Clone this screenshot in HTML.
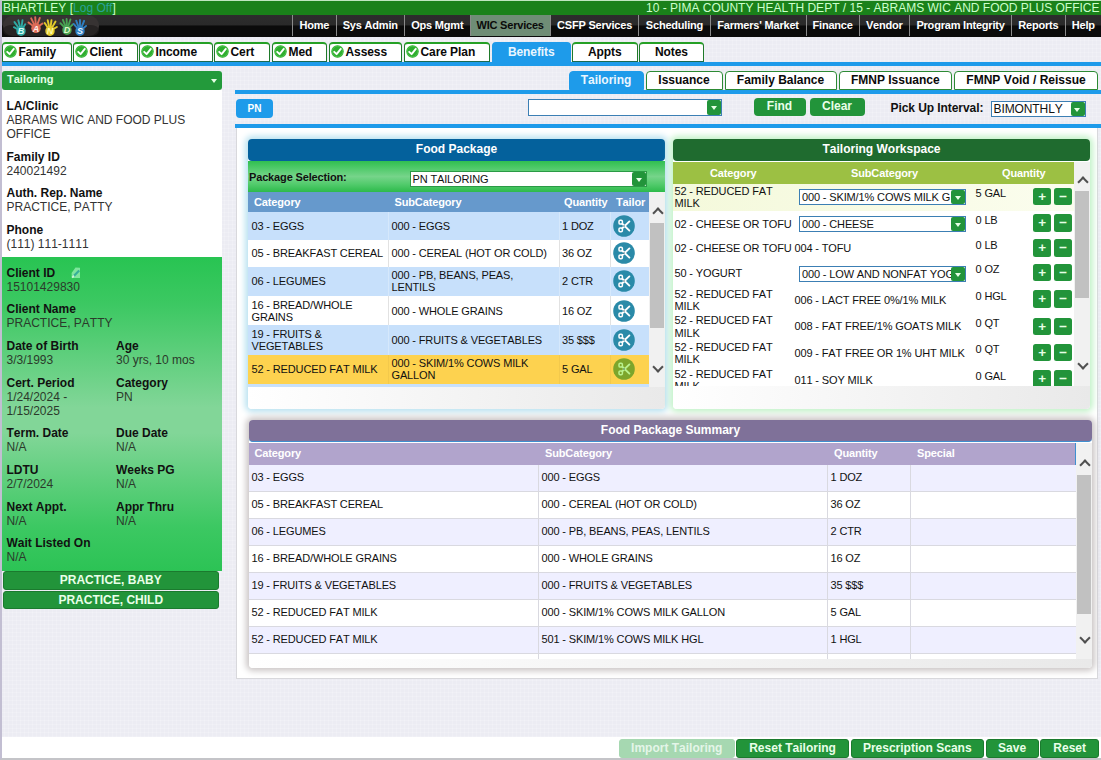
<!DOCTYPE html>
<html><head><meta charset="utf-8"><title>HANDS</title>
<style>
*{box-sizing:border-box;margin:0;padding:0}
html,body{width:1101px;height:760px;overflow:hidden}
body{font-family:"Liberation Sans",sans-serif;font-kerning:none;font-size:12px;color:#151515;background:#ececf3;position:relative}
body::before{content:"";position:absolute;left:0;top:0;width:1101px;height:760px;background-image:linear-gradient(rgba(255,255,255,.16) 1px,transparent 1px),linear-gradient(90deg,rgba(255,255,255,.16) 1px,transparent 1px);background-size:4px 4px}
#frame{position:absolute;left:0;top:0;width:1101px;height:760px;border-left:2px solid #c2bed2;border-top:1px solid #bfe6bf;border-bottom:2px solid #c4c4c8}
#top{position:absolute;left:2px;top:1px;width:1099px;height:14px;background:#1a811a;color:#ccffcc;font-size:12px;line-height:14px;white-space:nowrap}
#top .l{position:absolute;left:1px;top:0}
#top .r{position:absolute;right:1.5px;top:0}
#top a{color:#2aa39a}
#nav{position:absolute;left:2px;top:15px;width:1099px;height:21.5px;background:linear-gradient(#2d2d2d 0,#2a2a2a 45%,#0b0b0b 50%,#0b0b0b 100%)}
#logo{position:absolute;left:0;top:0}
#nav .it{position:absolute;top:0;height:21px;border-left:1px solid #8a8a8a;color:#fff;font-weight:bold;font-size:11px;line-height:21px;text-align:center;white-space:nowrap;letter-spacing:-0.2px}
#nav .sel{background:#6f8d76;color:#0a0a0a}
.tab{position:absolute;top:42px;height:19.5px;border:1px solid #1f7a2a;border-top:2px solid #25a025;border-bottom:1px solid #1b6b50;border-radius:4px 4px 0 0;background:#fff;font-weight:bold;font-size:12px;letter-spacing:-0.08px;line-height:16px;white-space:nowrap;color:#0a0a0a}
.tab .ck{position:absolute;left:1px;top:0.5px}
.tab .tx{position:absolute;left:15.5px;top:0}
.cx{display:block;text-align:center}
.tab.sel{background:#1e9bea;border-color:#1e9bea;color:#eaf6ff}
.stab{position:absolute;top:71px;height:19px;border:1px solid #2c8a34;border-top-width:1.5px;border-radius:4px 4px 0 0;background:#fff;font-weight:bold;font-size:12px;line-height:16px;white-space:nowrap;color:#0a0a0a}
.stab.sel{background:#1e9bea;border-color:#1e9bea;color:#eaf6ff}
.bline{position:absolute;background:#1e9bea}
.f12{font-size:12px!important;letter-spacing:-0.1px!important}
#sbhead{position:absolute;left:2px;top:71px;width:220px;height:18.5px;background:#239a3b;border-radius:3px;color:#e6ffe6;font-weight:bold;font-size:11px;line-height:17px;padding-left:5px}
#sbhead i{position:absolute;right:5px;top:8px;border:3.5px solid transparent;border-top:4px solid #e6ffe6;border-bottom:none}
#sbwhite{position:absolute;left:2px;top:90px;width:220px;height:167px;background:#fff;padding:9px 0 0 4.5px;font-size:12px;line-height:14px;color:#333}
#sbgreen{position:absolute;left:2px;top:257px;width:220px;height:314px;background:linear-gradient(#28c452 0,#3cc862 15%,#82d698 48%,#82d698 56%,#3cc862 86%,#2cc355 100%);padding:9px 0 0 4.5px;font-size:12px;line-height:14px;color:#2b3a2b}
.g{margin-bottom:8.6px;position:relative}
.g b{color:#111}
.g.two{height:28px}
.g.two.three{height:42px}
.g.two .c1{position:absolute;left:0;top:0}
.g.two .c2{position:absolute;left:109.5px;top:0}
.ed{position:absolute;left:64.7px;top:0.8px}
.sbbtn{position:absolute;left:2.5px;width:216.5px;height:18.5px;background:#22943a;border:1px solid #1b7a2e;border-radius:3px;color:#e9ffe9;font-weight:bold;font-size:12px;line-height:16.5px;text-align:center}
.btn{position:absolute;border-radius:4px;color:#fff;font-weight:bold;font-size:12px;text-align:center;line-height:17px}
.btn.blue{background:#1e9bea}
.btn.grn{background:#22943a;color:#e9ffe9}
#pui{position:absolute;left:890.5px;top:101px;font-weight:bold;font-size:12px;letter-spacing:-0.07px;line-height:15px;white-space:nowrap;color:#111}
.selbox{position:absolute;background:#fff;border:1px solid #2a9a45;font-size:11px;letter-spacing:-0.14px;line-height:14px;white-space:nowrap;overflow:hidden;color:#111}
.selbox.blue{border-color:#3c7fb4}
.selbox span{position:absolute;left:2px;top:0}
.selbox .dd{position:absolute;right:0;top:0;bottom:0;width:14px;background:#22943a;border-radius:2px}
.selbox .dd::after{content:"";position:absolute;left:3.5px;top:6px;border:3.5px solid transparent;border-top:4px solid #e6ffe6;border-bottom:none}
#cont{position:absolute;left:236px;top:127.5px;width:862px;height:551px;background:#fff;border:1px solid #d8d8dc;border-top:none}
.panel{position:absolute}
.ptitle{position:absolute;left:0;top:0;right:0;height:22px;border-radius:4px;color:#fff;font-weight:bold;font-size:12px;line-height:20px;text-align:center}
#fp{left:248px;top:139px;width:417px;height:270px;box-shadow:0 0 6px 3px #b9e2f0;border-radius:4px;background:#fff}
#fpsel{position:absolute;left:0;top:22px;width:417px;height:31px;background:linear-gradient(#30bf50 0,#52cb6c 25%,#76d48a 50%,#52cb6c 75%,#2dba4b 100%);font-size:11px;line-height:32px;color:#111}
#fpsel b{position:absolute;left:1px;top:0;letter-spacing:-0.15px}
.thead{position:absolute;left:0;color:#fff;font-weight:bold;font-size:11px;letter-spacing:-0.14px}
.thead span{position:absolute;top:0;line-height:inherit;white-space:nowrap}
.thead{line-height:20px}
.frow{position:absolute;left:0;width:401px;font-size:11px;letter-spacing:-0.14px;line-height:12px;color:#111}
.frow .c{position:absolute;top:0;bottom:0;display:flex;align-items:center}
.frow .c span{display:block;padding-left:3.5px}
.frow .b span{padding-left:2.5px}
.frow .q span{padding-left:2px}
.frow .a{left:0;width:140px}
.frow .b{left:140px;width:171px;border-left:1px solid rgba(255,255,255,.25)}
.frow .q{left:311px;width:51px;border-left:1px solid rgba(255,255,255,.25)}
.frow .t{left:362px;width:39px;border-left:1px solid rgba(255,255,255,.25)}
.frow.w .b,.frow.w .q,.frow.w .t{border-left-color:#e2e2e2}
.frow.y .b,.frow.y .q,.frow.y .t{border-left-color:#f3c94c}
.frow .sc{margin-left:2px}
.sbar{position:absolute;width:16px;background:#f1f1f1}
.sbar b{position:absolute;left:1px;width:14px;background:#c1c1c1}
.sbar i{position:absolute;left:3.5px;width:9px;height:9px}
.sbar i.up::after,.sbar i.dn::after{content:"";position:absolute;left:1px;top:2px;width:6px;height:6px;border-left:2px solid #505050;border-top:2px solid #505050;transform:rotate(45deg)}
.sbar i.dn::after{transform:rotate(225deg);top:-3px}
.pfoot{position:absolute;left:0;right:0;background:linear-gradient(90deg,#fff,#e9e9e9);border-radius:0 0 4px 4px}
#tw{left:673px;top:139px;width:417px;height:270px;box-shadow:0 0 6px 3px #c2f2c8;border-radius:4px;background:#fff}
.clip{position:absolute;left:0;overflow:hidden}
.trow{font-size:11px;letter-spacing:-0.14px;line-height:12.4px;color:#111;white-space:nowrap}
.trow .hl{position:absolute;left:0;width:401px;background:linear-gradient(90deg,#f4f9db,#fbfdee)}
.trow .tx{position:absolute}
.pm{position:absolute;width:18px;height:17.5px;background:#22943a;border-radius:2.5px;color:#e6ffe6;font-weight:bold;font-size:13.5px;line-height:17px;text-align:center}
#sm{left:249px;top:420px;width:843px;height:248px;box-shadow:0 0 6px 3px #cbc6c6;border-radius:4px;background:#fff}
.srow{position:absolute;left:0;width:827px;height:27px;font-size:11px;letter-spacing:-0.14px;line-height:24px;border-bottom:1px solid #d9d9e0;color:#111}
.srow .c{position:absolute;top:0;height:26px;border-left:1px solid #d9d9e0;white-space:nowrap}
.srow .c:first-child{border-left:none}
.srow .c span{padding-left:2.5px}
#bbar{position:absolute;left:2px;top:737px;width:1099px;height:21px;background:#fff}
.bbtn{position:absolute;top:739px;height:18.5px;background:#22943a;border:1px solid #1b7a2e;border-radius:3px;color:#e9ffe9;font-weight:bold;font-size:12px;line-height:16.5px;text-align:center;white-space:nowrap}
.bbtn.dis{background:#a6d8b1;border-color:#a6d8b1;color:#e4f5e8}

</style></head><body>
<div id="frame"></div>
<div id="top"><span class="l">BHARTLEY [<a>Log Off</a>]</span><span class="r">10 - PIMA COUNTY HEALTH DEPT / 15 - ABRAMS WIC AND FOOD PLUS OFFICE</span></div>
<div id="nav">
<svg id="logo" width="100" height="22" viewBox="0 0 100 22"><defs><filter id="lb" x="-10%" y="-10%" width="120%" height="120%"><feGaussianBlur stdDeviation="0.55"/></filter></defs><rect x="1" y="0.5" width="96" height="20.5" rx="10" fill="#373333"/><rect x="1" y="10" width="96" height="11" rx="8" fill="#1f1c1c" opacity=".7"/><g filter="url(#lb)"><ellipse cx="19.0" cy="16.0" rx="4.7" ry="4.9" fill="#2fa9a3"/><line x1="15.9" y1="14.4" x2="11.9" y2="12.2" stroke="#2fa9a3" stroke-width="1.9" stroke-linecap="round"/><line x1="16.9" y1="13.2" x2="12.5" y2="7.1" stroke="#2fa9a3" stroke-width="1.9" stroke-linecap="round"/><line x1="18.2" y1="12.6" x2="16.3" y2="5.3" stroke="#2fa9a3" stroke-width="1.9" stroke-linecap="round"/><line x1="19.5" y1="12.5" x2="20.5" y2="5.1" stroke="#2fa9a3" stroke-width="1.9" stroke-linecap="round"/><line x1="20.9" y1="13.0" x2="23.2" y2="9.2" stroke="#2fa9a3" stroke-width="1.9" stroke-linecap="round"/><ellipse cx="34.0" cy="13.2" rx="4.7" ry="4.9" fill="#dd6c58"/><line x1="31.2" y1="11.0" x2="26.5" y2="7.4" stroke="#dd6c58" stroke-width="1.9" stroke-linecap="round"/><line x1="32.5" y1="10.1" x2="29.2" y2="3.3" stroke="#dd6c58" stroke-width="1.9" stroke-linecap="round"/><line x1="33.8" y1="9.7" x2="33.2" y2="2.2" stroke="#dd6c58" stroke-width="1.9" stroke-linecap="round"/><line x1="35.2" y1="9.9" x2="37.8" y2="2.9" stroke="#dd6c58" stroke-width="1.9" stroke-linecap="round"/><line x1="36.8" y1="11.1" x2="40.5" y2="8.5" stroke="#dd6c58" stroke-width="1.9" stroke-linecap="round"/><ellipse cx="48.0" cy="16.0" rx="4.7" ry="4.9" fill="#e2cb2c"/><line x1="46.0" y1="13.1" x2="42.7" y2="8.1" stroke="#e2cb2c" stroke-width="1.9" stroke-linecap="round"/><line x1="47.3" y1="12.6" x2="45.7" y2="5.2" stroke="#e2cb2c" stroke-width="1.9" stroke-linecap="round"/><line x1="48.5" y1="12.5" x2="49.5" y2="5.1" stroke="#e2cb2c" stroke-width="1.9" stroke-linecap="round"/><line x1="49.8" y1="13.0" x2="53.5" y2="6.5" stroke="#e2cb2c" stroke-width="1.9" stroke-linecap="round"/><line x1="51.0" y1="14.2" x2="54.9" y2="12.0" stroke="#e2cb2c" stroke-width="1.9" stroke-linecap="round"/><ellipse cx="65.0" cy="15.0" rx="4.7" ry="4.9" fill="#48a352"/><line x1="62.6" y1="12.5" x2="58.4" y2="8.2" stroke="#48a352" stroke-width="1.9" stroke-linecap="round"/><line x1="63.7" y1="11.8" x2="60.9" y2="4.8" stroke="#48a352" stroke-width="1.9" stroke-linecap="round"/><line x1="64.9" y1="11.5" x2="64.6" y2="4.0" stroke="#48a352" stroke-width="1.9" stroke-linecap="round"/><line x1="66.1" y1="11.7" x2="68.4" y2="4.5" stroke="#48a352" stroke-width="1.9" stroke-linecap="round"/><line x1="67.5" y1="12.6" x2="70.8" y2="9.4" stroke="#48a352" stroke-width="1.9" stroke-linecap="round"/><ellipse cx="78.0" cy="16.0" rx="4.7" ry="4.9" fill="#2f7fc2"/><line x1="75.7" y1="13.4" x2="71.6" y2="8.9" stroke="#2f7fc2" stroke-width="1.9" stroke-linecap="round"/><line x1="76.8" y1="12.7" x2="74.2" y2="5.7" stroke="#2f7fc2" stroke-width="1.9" stroke-linecap="round"/><line x1="78.0" y1="12.5" x2="78.0" y2="5.0" stroke="#2f7fc2" stroke-width="1.9" stroke-linecap="round"/><line x1="79.3" y1="12.8" x2="82.1" y2="5.8" stroke="#2f7fc2" stroke-width="1.9" stroke-linecap="round"/><line x1="80.7" y1="13.8" x2="84.1" y2="10.9" stroke="#2f7fc2" stroke-width="1.9" stroke-linecap="round"/></g><text x="19.0" y="19.4" font-family="Liberation Sans,sans-serif" font-size="9" font-weight="bold" font-style="italic" text-anchor="middle" fill="#d5faf6">B</text><text x="34.0" y="16.6" font-family="Liberation Sans,sans-serif" font-size="9" font-weight="bold" font-style="italic" text-anchor="middle" fill="#ffece6">A</text><text x="48.0" y="19.4" font-family="Liberation Sans,sans-serif" font-size="9" font-weight="bold" font-style="italic" text-anchor="middle" fill="#fff9a8">N</text><text x="65.0" y="18.4" font-family="Liberation Sans,sans-serif" font-size="9" font-weight="bold" font-style="italic" text-anchor="middle" fill="#dcf9cc">D</text><text x="78.0" y="19.4" font-family="Liberation Sans,sans-serif" font-size="9" font-weight="bold" font-style="italic" text-anchor="middle" fill="#e6f2ff">S</text></svg>
<div class="it" style="left:290.2px;width:43.3px">Home</div>
<div class="it" style="left:333.5px;width:68.5px">Sys Admin</div>
<div class="it" style="left:402.0px;width:65.6px">Ops Mgmt</div>
<div class="it sel" style="left:467.6px;width:80.1px">WIC Services</div>
<div class="it" style="left:547.7px;width:88.7px">CSFP Services</div>
<div class="it" style="left:636.4px;width:71.2px">Scheduling</div>
<div class="it" style="left:707.6px;width:95.9px">Farmers' Market</div>
<div class="it" style="left:803.5px;width:53.2px">Finance</div>
<div class="it" style="left:856.7px;width:50.1px">Vendor</div>
<div class="it" style="left:906.8px;width:102.5px">Program Integrity</div>
<div class="it" style="left:1009.3px;width:53.2px">Reports</div>
<div class="it" style="left:1062.5px;width:36.5px">Help</div>
</div>
<div class="tab" style="left:2.0px;width:70.0px"><svg class="ck" width="13" height="13" viewBox="0 0 13 13"><circle cx="6.5" cy="6.5" r="6.2" fill="#2fae2f"/><circle cx="6.5" cy="6.5" r="5.4" fill="none" stroke="#57c957" stroke-width="0.8"/><path d="M3.2 6.8 L5.6 9.2 L9.8 3.9" fill="none" stroke="#fff" stroke-width="1.9" stroke-linecap="round" stroke-linejoin="round"/></svg><span class="tx">Family</span></div>
<div class="tab" style="left:73.0px;width:65.0px"><svg class="ck" width="13" height="13" viewBox="0 0 13 13"><circle cx="6.5" cy="6.5" r="6.2" fill="#2fae2f"/><circle cx="6.5" cy="6.5" r="5.4" fill="none" stroke="#57c957" stroke-width="0.8"/><path d="M3.2 6.8 L5.6 9.2 L9.8 3.9" fill="none" stroke="#fff" stroke-width="1.9" stroke-linecap="round" stroke-linejoin="round"/></svg><span class="tx">Client</span></div>
<div class="tab" style="left:139.0px;width:73.5px"><svg class="ck" width="13" height="13" viewBox="0 0 13 13"><circle cx="6.5" cy="6.5" r="6.2" fill="#2fae2f"/><circle cx="6.5" cy="6.5" r="5.4" fill="none" stroke="#57c957" stroke-width="0.8"/><path d="M3.2 6.8 L5.6 9.2 L9.8 3.9" fill="none" stroke="#fff" stroke-width="1.9" stroke-linecap="round" stroke-linejoin="round"/></svg><span class="tx">Income</span></div>
<div class="tab" style="left:214.0px;width:56.0px"><svg class="ck" width="13" height="13" viewBox="0 0 13 13"><circle cx="6.5" cy="6.5" r="6.2" fill="#2fae2f"/><circle cx="6.5" cy="6.5" r="5.4" fill="none" stroke="#57c957" stroke-width="0.8"/><path d="M3.2 6.8 L5.6 9.2 L9.8 3.9" fill="none" stroke="#fff" stroke-width="1.9" stroke-linecap="round" stroke-linejoin="round"/></svg><span class="tx">Cert</span></div>
<div class="tab" style="left:272.0px;width:55.0px"><svg class="ck" width="13" height="13" viewBox="0 0 13 13"><circle cx="6.5" cy="6.5" r="6.2" fill="#2fae2f"/><circle cx="6.5" cy="6.5" r="5.4" fill="none" stroke="#57c957" stroke-width="0.8"/><path d="M3.2 6.8 L5.6 9.2 L9.8 3.9" fill="none" stroke="#fff" stroke-width="1.9" stroke-linecap="round" stroke-linejoin="round"/></svg><span class="tx">Med</span></div>
<div class="tab" style="left:329.0px;width:73.0px"><svg class="ck" width="13" height="13" viewBox="0 0 13 13"><circle cx="6.5" cy="6.5" r="6.2" fill="#2fae2f"/><circle cx="6.5" cy="6.5" r="5.4" fill="none" stroke="#57c957" stroke-width="0.8"/><path d="M3.2 6.8 L5.6 9.2 L9.8 3.9" fill="none" stroke="#fff" stroke-width="1.9" stroke-linecap="round" stroke-linejoin="round"/></svg><span class="tx">Assess</span></div>
<div class="tab" style="left:404.0px;width:86.0px"><svg class="ck" width="13" height="13" viewBox="0 0 13 13"><circle cx="6.5" cy="6.5" r="6.2" fill="#2fae2f"/><circle cx="6.5" cy="6.5" r="5.4" fill="none" stroke="#57c957" stroke-width="0.8"/><path d="M3.2 6.8 L5.6 9.2 L9.8 3.9" fill="none" stroke="#fff" stroke-width="1.9" stroke-linecap="round" stroke-linejoin="round"/></svg><span class="tx">Care Plan</span></div>
<div class="tab sel" style="left:492px;width:78.5px"><span class="cx">Benefits</span></div>
<div class="tab c" style="left:572px;width:65.5px"><span class="cx">Appts</span></div>
<div class="tab c" style="left:639px;width:65px"><span class="cx">Notes</span></div>
<div class="bline" style="left:2px;top:61.5px;width:1099px;height:4px"></div>
<div id="sbhead"><span>Tailoring</span><i></i></div>
<div id="sbwhite"><div class="g"><b>LA/Clinic</b><br>ABRAMS WIC AND FOOD PLUS<br>OFFICE</div><div class="g"><b>Family ID</b><br>240021492</div><div class="g"><b>Auth. Rep. Name</b><br>PRACTICE, PATTY</div><div class="g"><b>Phone</b><br>(111) 111-1111</div></div>
<div id="sbgreen"><div class="g" style="margin-bottom:7.6px"><b>Client ID</b><svg class="ed" width="10" height="12" viewBox="0 0 10 12"><path d="M4.5 0.5 L9 0.8 L9 11 L0.8 11 L0.6 6 Z" fill="#9af0b4" opacity=".75"/><path d="M2.6 9.2 L8.2 3.4" stroke="#2aa59a" stroke-width="2.2" opacity=".85"/><path d="M1.2 10.6 L3 8.6" stroke="#c9f7d5" stroke-width="1.6"/></svg><br>15101429830</div><div class="g" style="margin-bottom:9.6px"><b>Client Name</b><br>PRACTICE, PATTY</div><div class="g two"><div class="c1"><b>Date of Birth</b><br>3/3/1993</div><div class="c2"><b>Age</b><br>30 yrs, 10 mos</div></div><div class="g two three"><div class="c1"><b>Cert. Period</b><br>1/24/2024 -<br>1/15/2025</div><div class="c2"><b>Category</b><br>PN</div></div><div class="g two"><div class="c1"><b>Term. Date</b><br>N/A</div><div class="c2"><b>Due Date</b><br>N/A</div></div><div class="g two"><div class="c1"><b>LDTU</b><br>2/7/2024</div><div class="c2"><b>Weeks PG</b><br>N/A</div></div><div class="g two"><div class="c1"><b>Next Appt.</b><br>N/A</div><div class="c2"><b>Appr Thru</b><br>N/A</div></div><div class="g two"><div class="c1"><b>Wait Listed On</b><br>N/A</div></div></div>
<div class="sbbtn" style="top:571px">PRACTICE, BABY</div>
<div class="sbbtn" style="top:590.5px">PRACTICE, CHILD</div>
<div class="stab sel" style="left:568.5px;width:75.0px"><span class="cx">Tailoring</span></div>
<div class="stab" style="left:645.5px;width:77.0px"><span class="cx">Issuance</span></div>
<div class="stab" style="left:724.5px;width:112.0px"><span class="cx">Family Balance</span></div>
<div class="stab" style="left:838.5px;width:113.5px"><span class="cx">FMNP Issuance</span></div>
<div class="stab" style="left:954.0px;width:144.0px"><span class="cx">FMNP Void / Reissue</span></div>
<div class="bline" style="left:235px;top:90px;width:866px;height:4px"></div>
<div class="btn blue" style="left:236px;top:98.5px;width:37px;height:19px;line-height:19px;font-size:10px">PN</div>
<div class="selbox blue" style="left:528px;top:99px;width:194px;height:16.5px"><span></span><i class="dd"></i></div>
<div class="btn grn" style="left:753.5px;top:97.5px;width:52px;height:18px">Find</div>
<div class="btn grn" style="left:809.5px;top:97.5px;width:55px;height:18px">Clear</div>
<div id="pui">Pick Up Interval:</div>
<div class="selbox blue f12" style="left:990.5px;top:100.5px;width:95px;height:16.5px"><span>BIMONTHLY</span><i class="dd"></i></div>
<div class="bline" style="left:235px;top:124px;width:866px;height:3.5px"></div>
<div id="cont"></div>
<div id="fp" class="panel">
<div class="ptitle" style="background:#04619c">Food Package</div>
<div id="fpsel"><b>Package Selection:</b><div class="selbox" style="left:161.5px;top:10px;width:237.5px;height:16px"><span>PN TAILORING</span><i class="dd"></i></div></div>
<div class="thead" style="top:53px;height:20px;background:#6699cc;width:401px"><span style="left:6px">Category</span><span style="left:146.5px">SubCategory</span><span style="left:316px">Quantity</span><span style="left:368px">Tailor</span></div>
<div class="frow b" style="top:73.0px;height:28.0px;background:#c7e0fb"><div class="c a"><span>03 - EGGS</span></div><div class="c b"><span>000 - EGGS</span></div><div class="c q"><span>1 DOZ</span></div><div class="c t"><svg class="sc" width="22" height="22" viewBox="0 0 22 22"><circle cx="11" cy="11" r="10.8" fill="#2a8aa8"/><g fill="none" stroke="#fff" stroke-linecap="round"><rect x="6" y="5.3" width="3.4" height="3.8" rx="1.2" stroke-width="1.5"/><rect x="6" y="12.9" width="3.4" height="3.8" rx="1.2" stroke-width="1.5"/><path d="M9.3 8.8 L16.4 15.6 M9.3 13.2 L16.4 6.4" stroke-width="1.9"/></g><circle cx="11" cy="11" r=".7" fill="#1a4a5a"/></svg></div></div>
<div class="frow w" style="top:101.0px;height:26.5px;background:#fff"><div class="c a"><span>05 - BREAKFAST CEREAL</span></div><div class="c b"><span>000 - CEREAL (HOT OR COLD)</span></div><div class="c q"><span>36 OZ</span></div><div class="c t"><svg class="sc" width="22" height="22" viewBox="0 0 22 22"><circle cx="11" cy="11" r="10.8" fill="#2a8aa8"/><g fill="none" stroke="#fff" stroke-linecap="round"><rect x="6" y="5.3" width="3.4" height="3.8" rx="1.2" stroke-width="1.5"/><rect x="6" y="12.9" width="3.4" height="3.8" rx="1.2" stroke-width="1.5"/><path d="M9.3 8.8 L16.4 15.6 M9.3 13.2 L16.4 6.4" stroke-width="1.9"/></g><circle cx="11" cy="11" r=".7" fill="#1a4a5a"/></svg></div></div>
<div class="frow b" style="top:127.5px;height:29.5px;background:#c7e0fb"><div class="c a"><span>06 - LEGUMES</span></div><div class="c b"><span>000 - PB, BEANS, PEAS,<br>LENTILS</span></div><div class="c q"><span>2 CTR</span></div><div class="c t"><svg class="sc" width="22" height="22" viewBox="0 0 22 22"><circle cx="11" cy="11" r="10.8" fill="#2a8aa8"/><g fill="none" stroke="#fff" stroke-linecap="round"><rect x="6" y="5.3" width="3.4" height="3.8" rx="1.2" stroke-width="1.5"/><rect x="6" y="12.9" width="3.4" height="3.8" rx="1.2" stroke-width="1.5"/><path d="M9.3 8.8 L16.4 15.6 M9.3 13.2 L16.4 6.4" stroke-width="1.9"/></g><circle cx="11" cy="11" r=".7" fill="#1a4a5a"/></svg></div></div>
<div class="frow w" style="top:157.0px;height:29.0px;background:#fff"><div class="c a"><span>16 - BREAD/WHOLE<br>GRAINS</span></div><div class="c b"><span>000 - WHOLE GRAINS</span></div><div class="c q"><span>16 OZ</span></div><div class="c t"><svg class="sc" width="22" height="22" viewBox="0 0 22 22"><circle cx="11" cy="11" r="10.8" fill="#2a8aa8"/><g fill="none" stroke="#fff" stroke-linecap="round"><rect x="6" y="5.3" width="3.4" height="3.8" rx="1.2" stroke-width="1.5"/><rect x="6" y="12.9" width="3.4" height="3.8" rx="1.2" stroke-width="1.5"/><path d="M9.3 8.8 L16.4 15.6 M9.3 13.2 L16.4 6.4" stroke-width="1.9"/></g><circle cx="11" cy="11" r=".7" fill="#1a4a5a"/></svg></div></div>
<div class="frow b" style="top:186.0px;height:29.5px;background:#c7e0fb"><div class="c a"><span>19 - FRUITS &amp;<br>VEGETABLES</span></div><div class="c b"><span>000 - FRUITS &amp; VEGETABLES</span></div><div class="c q"><span>35 $$$</span></div><div class="c t"><svg class="sc" width="22" height="22" viewBox="0 0 22 22"><circle cx="11" cy="11" r="10.8" fill="#2a8aa8"/><g fill="none" stroke="#fff" stroke-linecap="round"><rect x="6" y="5.3" width="3.4" height="3.8" rx="1.2" stroke-width="1.5"/><rect x="6" y="12.9" width="3.4" height="3.8" rx="1.2" stroke-width="1.5"/><path d="M9.3 8.8 L16.4 15.6 M9.3 13.2 L16.4 6.4" stroke-width="1.9"/></g><circle cx="11" cy="11" r=".7" fill="#1a4a5a"/></svg></div></div>
<div class="frow y" style="top:215.5px;height:29.5px;background:#fdd24f"><div class="c a"><span>52 - REDUCED FAT MILK</span></div><div class="c b"><span>000 - SKIM/1% COWS MILK<br>GALLON</span></div><div class="c q"><span>5 GAL</span></div><div class="c t"><svg class="sc" width="22" height="22" viewBox="0 0 22 22"><circle cx="11" cy="11" r="10.8" fill="#7da52b"/><g fill="none" stroke="#baf18e" stroke-linecap="round"><rect x="6" y="5.3" width="3.4" height="3.8" rx="1.2" stroke-width="1.5"/><rect x="6" y="12.9" width="3.4" height="3.8" rx="1.2" stroke-width="1.5"/><path d="M9.3 8.8 L16.4 15.6 M9.3 13.2 L16.4 6.4" stroke-width="1.9"/></g><circle cx="11" cy="11" r=".7" fill="#1a4a5a"/></svg></div></div>
<div class="frow b" style="top:245px;height:3px;background:#c7e0fb"></div>
<div class="sbar" style="left:401px;top:53px;height:195px"><i class="up" style="top:15px"></i><b style="top:31px;height:105px"></b><i class="dn" style="top:174px"></i></div>
<div class="pfoot" style="top:248px;height:22px"></div>
</div>
<div id="tw" class="panel">
<div class="ptitle" style="background:#1f6b2f">Tailoring Workspace</div>
<div class="thead" style="top:23px;height:22px;line-height:22px;background:#9cc043;width:401px"><span style="left:37px">Category</span><span style="left:178px">SubCategory</span><span style="left:329px">Quantity</span></div>
<div class="clip trow" style="top:45px;height:202px;width:401px"><div class="hl" style="top:0;height:27px"></div><div class="tx" style="left:1.5px;top:0.9px">52 - REDUCED FAT<br>MILK</div><div class="selbox blue" style="left:126px;top:5.0px;width:167px;height:16px"><span>000 - SKIM/1% COWS MILK G</span><i class="dd"></i></div><div class="tx" style="left:302.5px;top:3.0px">5 GAL</div><div class="pm" style="left:360px;top:3.5px">+</div><div class="pm" style="left:381px;top:3.5px">&minus;</div>
<div class="tx" style="left:1.5px;top:33.8px">02 - CHEESE OR TOFU</div><div class="selbox blue" style="left:126px;top:32.0px;width:167px;height:16px"><span>000 - CHEESE</span><i class="dd"></i></div><div class="tx" style="left:302.5px;top:29.5px">0 LB</div><div class="pm" style="left:360px;top:30.0px">+</div><div class="pm" style="left:381px;top:30.0px">&minus;</div>
<div class="tx" style="left:1.5px;top:57.8px">02 - CHEESE OR TOFU</div><div class="tx" style="left:121.5px;top:57.8px">004 - TOFU</div><div class="tx" style="left:302.5px;top:54.5px">0 LB</div><div class="pm" style="left:360px;top:55.0px">+</div><div class="pm" style="left:381px;top:55.0px">&minus;</div>
<div class="tx" style="left:1.5px;top:82.8px">50 - YOGURT</div><div class="selbox blue" style="left:126px;top:82.0px;width:167px;height:16px"><span>000 - LOW AND NONFAT YOG</span><i class="dd"></i></div><div class="tx" style="left:302.5px;top:79.0px">0 OZ</div><div class="pm" style="left:360px;top:79.5px">+</div><div class="pm" style="left:381px;top:79.5px">&minus;</div>
<div class="tx" style="left:1.5px;top:103.8px">52 - REDUCED FAT<br>MILK</div><div class="tx" style="left:121.5px;top:110.0px">006 - LACT FREE 0%/1% MILK</div><div class="tx" style="left:302.5px;top:105.5px">0 HGL</div><div class="pm" style="left:360px;top:106.0px">+</div><div class="pm" style="left:381px;top:106.0px">&minus;</div>
<div class="tx" style="left:1.5px;top:130.1px">52 - REDUCED FAT<br>MILK</div><div class="tx" style="left:121.5px;top:136.3px">008 - FAT FREE/1% GOATS MILK</div><div class="tx" style="left:302.5px;top:133.0px">0 QT</div><div class="pm" style="left:360px;top:133.5px">+</div><div class="pm" style="left:381px;top:133.5px">&minus;</div>
<div class="tx" style="left:1.5px;top:156.6px">52 - REDUCED FAT<br>MILK</div><div class="tx" style="left:121.5px;top:162.8px">009 - FAT FREE OR 1% UHT MILK</div><div class="tx" style="left:302.5px;top:159.0px">0 QT</div><div class="pm" style="left:360px;top:159.5px">+</div><div class="pm" style="left:381px;top:159.5px">&minus;</div>
<div class="tx" style="left:1.5px;top:183.6px">52 - REDUCED FAT<br>MILK</div><div class="tx" style="left:121.5px;top:189.8px">011 - SOY MILK</div><div class="tx" style="left:302.5px;top:185.5px">0 GAL</div><div class="pm" style="left:360px;top:186.0px">+</div><div class="pm" style="left:381px;top:186.0px">&minus;</div>
</div>
<div class="sbar" style="left:401px;top:23px;height:224px"><i class="up" style="top:14px"></i><b style="top:29px;height:107px"></b><i class="dn" style="top:201px"></i></div>
<div class="pfoot" style="top:247px;height:23px"></div>
</div>
<div id="sm" class="panel">
<div class="ptitle" style="background:#7f7199;height:22px;border-bottom:1px solid #3f8fd0">Food Package Summary</div>
<div class="thead" style="top:23px;height:22px;line-height:21px;background:#b1a4cc;width:827px;border-right:1px solid #3f8fd0"><span style="left:5.5px">Category</span><span style="left:296px">SubCategory</span><span style="left:585px">Quantity</span><span style="left:668px">Special</span></div>
<div class="clip" style="top:45px;height:194px;width:827px"><div class="srow" style="top:0.0px;background:#efefff"><div class="c" style="left:0;width:290px"><span>03 - EGGS</span></div><div class="c" style="left:289px;width:291px"><span>000 - EGGS</span></div><div class="c" style="left:578px;width:83px"><span>1 DOZ</span></div><div class="c" style="left:661px;width:166px"></div></div>
<div class="srow" style="top:27.0px;background:#fff"><div class="c" style="left:0;width:290px"><span>05 - BREAKFAST CEREAL</span></div><div class="c" style="left:289px;width:291px"><span>000 - CEREAL (HOT OR COLD)</span></div><div class="c" style="left:578px;width:83px"><span>36 OZ</span></div><div class="c" style="left:661px;width:166px"></div></div>
<div class="srow" style="top:54.0px;background:#efefff"><div class="c" style="left:0;width:290px"><span>06 - LEGUMES</span></div><div class="c" style="left:289px;width:291px"><span>000 - PB, BEANS, PEAS, LENTILS</span></div><div class="c" style="left:578px;width:83px"><span>2 CTR</span></div><div class="c" style="left:661px;width:166px"></div></div>
<div class="srow" style="top:81.0px;background:#fff"><div class="c" style="left:0;width:290px"><span>16 - BREAD/WHOLE GRAINS</span></div><div class="c" style="left:289px;width:291px"><span>000 - WHOLE GRAINS</span></div><div class="c" style="left:578px;width:83px"><span>16 OZ</span></div><div class="c" style="left:661px;width:166px"></div></div>
<div class="srow" style="top:108.0px;background:#efefff"><div class="c" style="left:0;width:290px"><span>19 - FRUITS &amp; VEGETABLES</span></div><div class="c" style="left:289px;width:291px"><span>000 - FRUITS &amp; VEGETABLES</span></div><div class="c" style="left:578px;width:83px"><span>35 $$$</span></div><div class="c" style="left:661px;width:166px"></div></div>
<div class="srow" style="top:135.0px;background:#fff"><div class="c" style="left:0;width:290px"><span>52 - REDUCED FAT MILK</span></div><div class="c" style="left:289px;width:291px"><span>000 - SKIM/1% COWS MILK GALLON</span></div><div class="c" style="left:578px;width:83px"><span>5 GAL</span></div><div class="c" style="left:661px;width:166px"></div></div>
<div class="srow" style="top:162.0px;background:#efefff"><div class="c" style="left:0;width:290px"><span>52 - REDUCED FAT MILK</span></div><div class="c" style="left:289px;width:291px"><span>501 - SKIM/1% COWS MILK HGL</span></div><div class="c" style="left:578px;width:83px"><span>1 HGL</span></div><div class="c" style="left:661px;width:166px"></div></div>
<div class="srow" style="top:189.0px;background:#fff"><div class="c" style="left:0;width:290px"><span></span></div><div class="c" style="left:289px;width:291px"><span></span></div><div class="c" style="left:578px;width:83px"><span></span></div><div class="c" style="left:661px;width:166px"></div></div>
</div>
<div class="sbar" style="left:827px;top:23px;height:216px"><i class="up" style="top:16px"></i><b style="top:32px;height:139px"></b><i class="dn" style="top:194px"></i></div>
<div class="pfoot" style="top:239px;height:9px"></div>
</div>
<div id="bbar"></div>
<div class="bbtn dis" style="left:618.5px;width:116.5px">Import Tailoring</div>
<div class="bbtn" style="left:736.3px;width:112.5px">Reset Tailoring</div>
<div class="bbtn" style="left:850.5px;width:133.5px">Prescription Scans</div>
<div class="bbtn" style="left:985.5px;width:53.1px">Save</div>
<div class="bbtn" style="left:1040.4px;width:58.6px">Reset</div>
</body></html>
